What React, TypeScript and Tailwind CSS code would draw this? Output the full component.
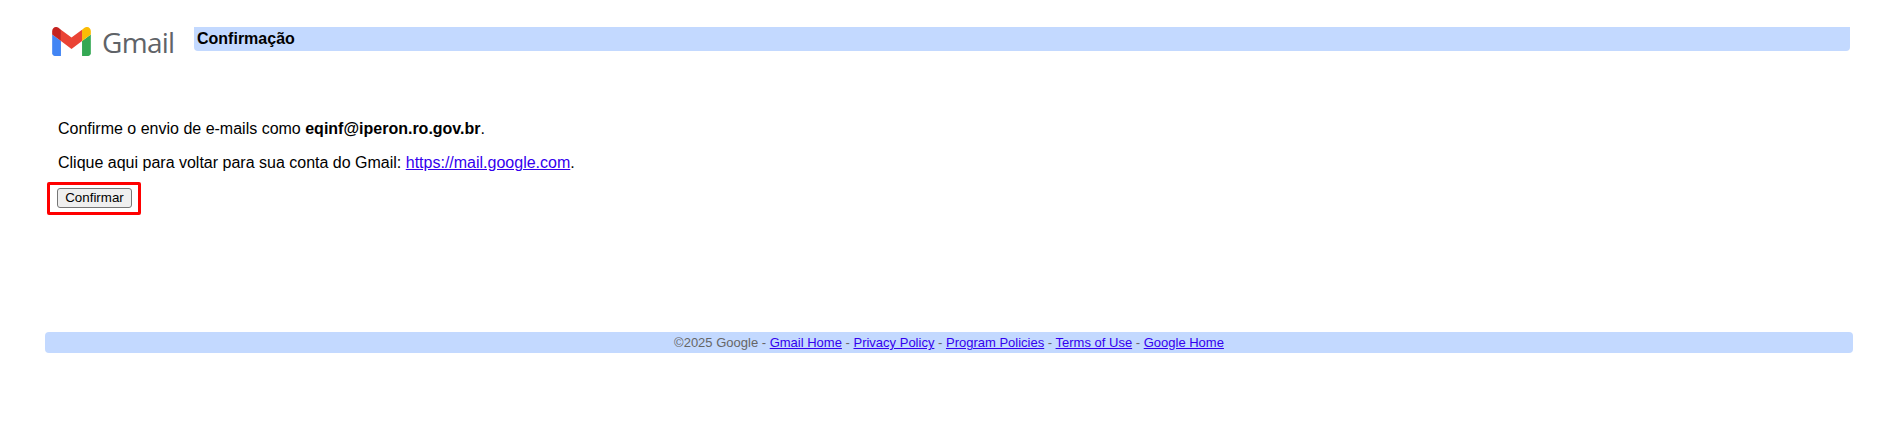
export default function App() {
  const link = "text-[#3300ee] underline";
  return (
    <div className="relative bg-white min-h-[424px] font-['Liberation_Sans',Arial,sans-serif] text-[16px] text-black">
      <div className="flex pt-[27px] pl-[52px] pr-[38px] items-start">
        <div className="flex items-start w-[142px] shrink-0 h-[30px]">
          <svg width="39" height="29" viewBox="52 42 88 66" className="shrink-0">
            <path fill="#4285f4" d="M58 108h14V74L52 59v43c0 3.32 2.69 6 6 6" />
            <path fill="#34a853" d="M120 108h14c3.32 0 6-2.69 6-6V59l-20 15" />
            <path fill="#fbbc04" d="M120 48v26l20-15v-8c0-7.42-8.47-11.65-14.4-7.2" />
            <path fill="#ea4335" d="M72 74V48l24 18 24-18v26L96 92" />
            <path fill="#c5221f" d="M52 51v8l20 15V48l-5.6-4.2c-5.94-4.45-14.4-.22-14.4 7.2" />
          </svg>
          <span className="ml-[11px] text-[28px] leading-[30px] text-[#5f6368] font-['Open_Sans',sans-serif] tracking-[-0.7px]">Gmail</span>
        </div>
        <div className="flex-1 h-[24px] bg-[#c3d9ff] rounded-b-[4px] pl-[3px] font-bold leading-[23px]">Confirmação</div>
      </div>
      <div className="pl-[58px] pt-[63px]">
        <p className="leading-[18px]">Confirme o envio de e-mails como <b>eqinf@iperon.ro.gov.br</b>.</p>
        <p className="leading-[18px] mt-[16px]">Clique aqui para voltar para sua conta do Gmail: <a href="#" className={link}>https://mail.google.com</a>.</p>
        <button className="mt-[16px] ml-[-1px] block w-[75px] h-[20px] box-border bg-[#efefef] border border-[#767676] rounded-[3px] text-[13.33px] leading-[18px] text-black">Confirmar</button>
      </div>
      <div className="absolute left-[47px] top-[182px] w-[94px] h-[33px] border-[3px] border-[#ff0000] rounded-[2px]" />
      <div className="mt-[124px] ml-[45px] w-[1808px] h-[21px] bg-[#c3d9ff] rounded-[4px] text-center text-[13px] leading-[21px] text-[#666666]">
        ©2025 Google - <a href="#" className={link}>Gmail Home</a> - <a href="#" className={link}>Privacy Policy</a> - <a href="#" className={link}>Program Policies</a> - <a href="#" className={link}>Terms of Use</a> - <a href="#" className={link}>Google Home</a>
      </div>
    </div>
  );
}
